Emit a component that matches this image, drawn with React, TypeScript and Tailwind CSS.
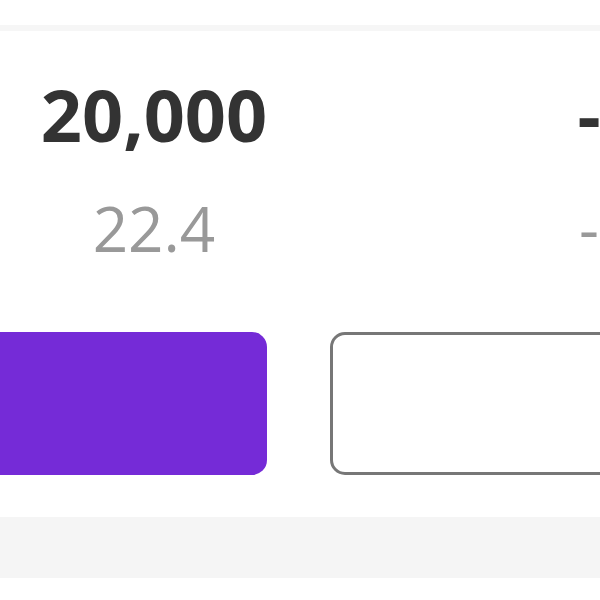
export default function App() {
  return (
    <div className="w-[600px] h-[600px] overflow-hidden bg-white font-['Open_Sans',sans-serif]">
      <div className="pt-[25px]">
        <div className="h-[6px] bg-[#f6f6f6]" />
      </div>

      {/* values */}
      <div className="mt-[47px] flex">
        <div className="w-[308px] shrink-0 flex flex-col items-center">
          <div className="text-[72px] leading-[72px] font-bold text-[#333]">20,000</div>
          <div className="mt-[47px] text-[62px] leading-[62px] text-[#999]">22.4</div>
        </div>
        <div className="w-[562px] shrink-0 flex flex-col items-center">
          <div className="text-[72px] leading-[72px] font-bold text-[#333]">-</div>
          <div className="mt-[47px] text-[62px] leading-[62px] text-[#999]">-</div>
        </div>
      </div>

      {/* buttons */}
      <div className="mt-[73px] flex gap-[63px] -ml-[40px]">
        <button className="w-[307px] h-[143px] shrink-0 rounded-[15px] bg-[#752bd7]" />
        <button className="w-[320px] h-[143px] shrink-0 rounded-[15px] border-[3px] border-[#777] bg-white" />
      </div>

      <div className="mt-[42px] h-[61px] bg-[#f5f5f5]" />
    </div>
  );
}
